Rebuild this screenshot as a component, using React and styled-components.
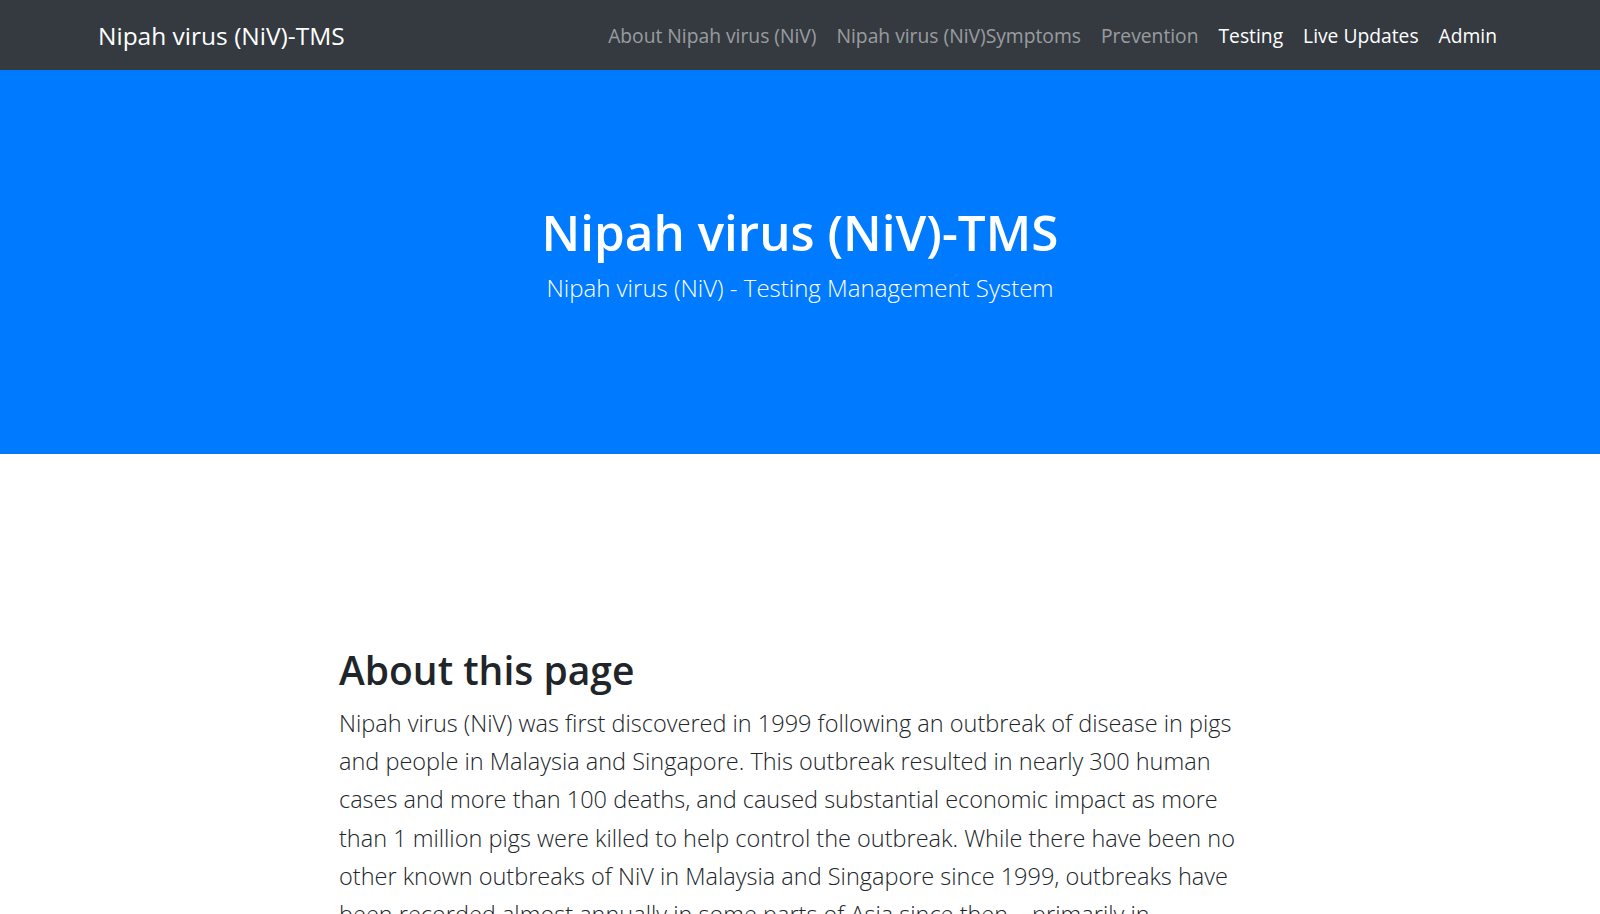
import React from "react";
import styled, { createGlobalStyle } from "styled-components";

const GlobalStyle = createGlobalStyle`
  body {
    margin: 0;
    background: #fff;
    font-family: "Open Sans", "Noto Sans", sans-serif;
    color: #212529;
  }
`;

const Navbar = styled.nav`
  display: flex;
  align-items: center;
  justify-content: space-between;
  height: 70px;
  padding: 0 93px 0 98px;
  background-color: #343a40;
`;

const Brand = styled.a`
  color: #fff;
  font-size: 24.5px;
  text-decoration: none;
  white-space: nowrap;
`;

const NavList = styled.ul`
  display: flex;
  list-style: none;
  margin: 0;
  padding: 0;
`;

const NavLink = styled.a`
  display: block;
  padding: 8px 10px;
  font-size: 19.25px;
  color: ${(p) => (p.$light ? "#fff" : "rgba(255, 255, 255, 0.5)")};
  text-decoration: none;
  white-space: nowrap;
`;

const Hero = styled.header`
  display: flex;
  flex-direction: column;
  align-items: center;
  height: 384px;
  box-sizing: border-box;
  padding-top: 132px;
  background-color: #007bff;
  color: #fff;
  text-align: center;
`;

const HeroTitle = styled.h1`
  margin: 0;
  font-size: 49.4px;
  font-weight: 600;
  line-height: 1.2;
`;

const HeroLead = styled.p`
  margin: 9px 0 0;
  font-size: 24px;
  font-weight: 300;
  line-height: 1.5;
`;

const Section = styled.section`
  max-width: 922px;
  margin: 0 auto;
  padding-top: 193px;
`;

const Heading = styled.h2`
  margin: 0 0 10px;
  font-size: 39px;
  font-weight: 600;
  line-height: 1.2;
`;

const Lead = styled.p`
  margin: 0;
  font-size: 23.5px;
  font-weight: 300;
  line-height: 38.3px;
  color: #212529;
`;

const links = [
  { label: "About Nipah virus (NiV)" },
  { label: "Nipah virus (NiV)Symptoms" },
  { label: "Prevention" },
  { label: "Testing", light: true },
  { label: "Live Updates", light: true },
  { label: "Admin", light: true },
];

const App = () => {
  return (
    <>
      <GlobalStyle />
      <Navbar>
        <Brand href="#">Nipah virus (NiV)-TMS</Brand>
        <NavList>
          {links.map((l) => (
            <li key={l.label}>
              <NavLink href="#" $light={l.light}>
                {l.label}
              </NavLink>
            </li>
          ))}
        </NavList>
      </Navbar>

      <Hero>
        <HeroTitle>Nipah virus (NiV)-TMS</HeroTitle>
        <HeroLead>Nipah virus (NiV) - Testing Management System</HeroLead>
      </Hero>

      <Section>
        <Heading>About this page</Heading>
        <Lead>
          Nipah virus (NiV) was first discovered in 1999 following an outbreak
          of disease in pigs and people in Malaysia and Singapore. This outbreak
          resulted in nearly 300 human cases and more than 100 deaths, and
          caused substantial economic impact as more than 1 million pigs were
          killed to help control the outbreak. While there have been no other
          known outbreaks of NiV in Malaysia and Singapore since 1999, outbreaks
          have been recorded almost annually in some parts of Asia since then –
          primarily in Bangladesh and India. The virus has been shown to spread
          from person to person in these outbreaks, raising concerns about the
          potential for NiV to cause a global pandemic.
        </Lead>
      </Section>
    </>
  );
};

export default App;
